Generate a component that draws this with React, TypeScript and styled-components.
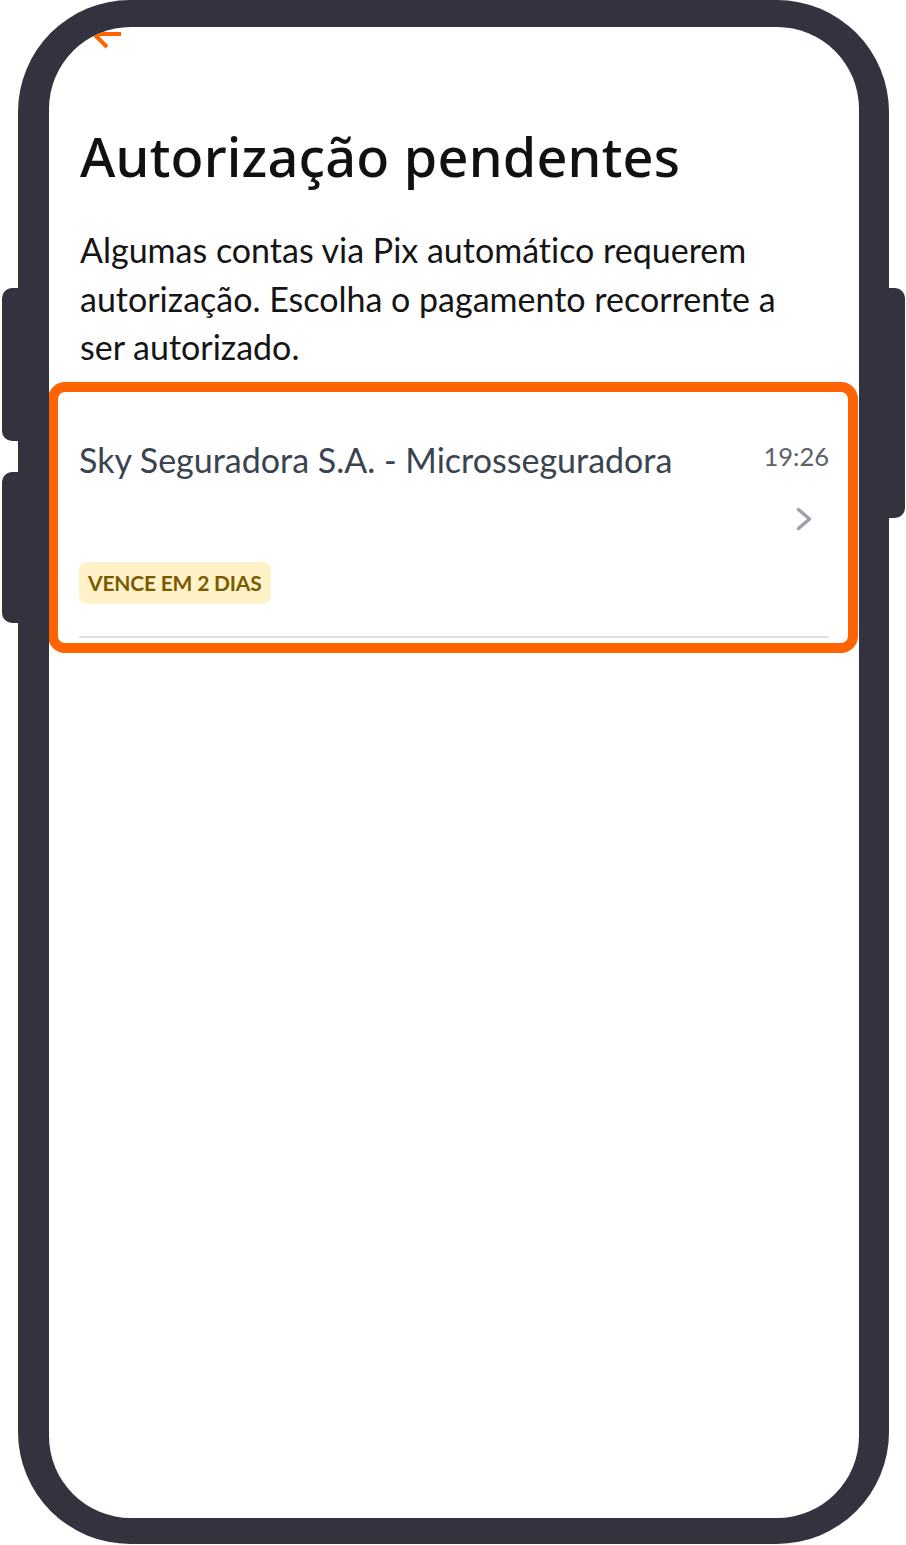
import React from "react"
import styled, { createGlobalStyle } from "styled-components"

const GlobalStyle = createGlobalStyle`
  html, body {
    margin: 0;
    padding: 0;
    background: #ffffff;
  }
  body {
    font-family: "Lato", "Noto Sans", sans-serif;
    font-variant-ligatures: none;
  }
`

const frameColor = "#33323f"
const orange = "#ff6400"

const Stage = styled.div`
  display: flex;
  align-items: flex-start;
  padding-left: 2px;
  width: 906px;
  height: 1545px;
  box-sizing: border-box;
  overflow: hidden;
`

const SideButtons = styled.div`
  display: flex;
  flex-direction: column;
  gap: 31px;
  width: 16px;
  padding-top: 288px;
  flex-shrink: 0;
`

const SideButton = styled.div<{ $height: number; $side: "left" | "right" }>`
  height: ${(p) => p.$height}px;
  background: ${frameColor};
  border-radius: ${(p) => (p.$side === "left" ? "10px 0 0 10px" : "0 10px 10px 0")};
  margin-${(p) => (p.$side === "left" ? "right" : "left")}: -1px;
`

const Device = styled.div`
  width: 871px;
  height: 1544px;
  box-sizing: border-box;
  padding: 27px 30px 26px 31px;
  background: ${frameColor};
  border-radius: 112px;
  flex-shrink: 0;
`

const Screen = styled.div`
  height: 100%;
  background: #ffffff;
  border-radius: 82px;
  overflow: hidden;
  display: flex;
  flex-direction: column;
`

const Header = styled.div`
  height: 97px;
  padding-left: 40px;
  flex-shrink: 0;
`

const Title = styled.h1`
  margin: 0 0 0 31px;
  font-family: "Noto Sans", "DejaVu Sans", sans-serif;
  font-weight: 500;
  font-size: 54px;
  line-height: 64px;
  color: #111111;
  letter-spacing: 0.2px;
`

const Intro = styled.p`
  margin: 38px 75px 0 31px;
  font-family: "Lato", sans-serif;
  font-size: 34px;
  line-height: 48.5px;
  color: #151515;
`

const Highlight = styled.div`
  margin: 10px 1px 0 -1px;
  border: 10px solid ${orange};
  border-radius: 17px;
  background: #ffffff;
`

const Item = styled.div`
  padding: 48px 19px 5px 21px;
`

const ItemTop = styled.div`
  display: flex;
  justify-content: space-between;
  align-items: flex-start;
`

const Payee = styled.div`
  font-family: "Lato", sans-serif;
  font-size: 34px;
  line-height: 40px;
  color: #3a4350;
`

const Meta = styled.div`
  display: flex;
  flex-direction: column;
  align-items: flex-end;
  padding-top: 1px;
`

const Time = styled.div`
  font-family: "Lato", sans-serif;
  font-size: 25.5px;
  line-height: 30px;
  color: #5d6268;
`

const Chevron = styled.svg`
  display: block;
  margin-top: 36px;
  margin-right: 17px;
`

const Badge = styled.span`
  display: inline-flex;
  align-items: center;
  height: 42px;
  margin-top: 31px;
  padding: 0 9px;
  border-radius: 8px;
  background: #fff2c9;
  font-family: "Lato", sans-serif;
  font-weight: 700;
  font-size: 21px;
  letter-spacing: -0.2px;
  color: #7a5b00;
`

const Divider = styled.div`
  height: 2px;
  margin-top: 32px;
  background: #e0e0e0;
`

const BackArrow = () => (
  <svg width="40" height="30" viewBox="0 0 40 30">
    <path d="M5 7 H32 M5 7 L18 20 M5 7 L18 -6" stroke={orange} strokeWidth="4" fill="none" />
  </svg>
)

export default function App() {
  return (
    <>
      <GlobalStyle />
      <Stage>
        <SideButtons>
          <SideButton $side="left" $height={153} />
          <SideButton $side="left" $height={151} />
        </SideButtons>
        <Device>
          <Screen>
            <Header>
              <BackArrow />
            </Header>
            <Title>Autorização pendentes</Title>
            <Intro>
              Algumas contas via Pix automático requerem autorização. Escolha o pagamento
              recorrente a ser autorizado.
            </Intro>
            <Highlight>
              <Item>
                <ItemTop>
                  <Payee>Sky Seguradora S.A. - Microsseguradora</Payee>
                  <Meta>
                    <Time>19:26</Time>
                    <Chevron width="16" height="24" viewBox="0 0 16 24">
                      <polyline
                        points="2.5,2.5 13.5,12 2.5,21.5"
                        fill="none"
                        stroke="#9ca3ad"
                        strokeWidth="3.5"
                        strokeLinecap="round"
                        strokeLinejoin="round"
                      />
                    </Chevron>
                  </Meta>
                </ItemTop>
                <Badge>VENCE EM 2 DIAS</Badge>
                <Divider />
              </Item>
            </Highlight>
          </Screen>
        </Device>
        <SideButtons>
          <SideButton $side="right" $height={230} />
        </SideButtons>
      </Stage>
    </>
  )
}
